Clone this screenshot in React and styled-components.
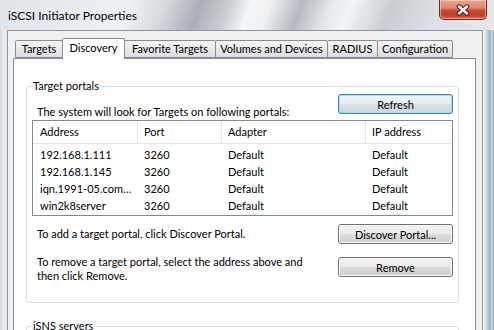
import React from 'react';
import styled, { createGlobalStyle } from 'styled-components';

const GlobalStyle = createGlobalStyle`
  html, body { margin: 0; padding: 0; }
  body {
    width: 494px;
    height: 330px;
    overflow: hidden;
    font-family: "Segoe UI", Lato, "Liberation Sans", sans-serif;
    font-size: 11px;
    color: #000;
  }
  * { box-sizing: border-box; }
`;

const Window = styled.div`
  width: 494px;
  height: 330px;
  display: flex;
  flex-direction: column;
  overflow: hidden;
`;

// aero glass strip with the diagonal reflections
const TitleBar = styled.div`
  height: 30px;
  flex: none;
  display: flex;
  justify-content: space-between;
  align-items: flex-start;
  padding: 0 7px 0 8px;
  background: linear-gradient(110deg,
    #dfe4e9 0%, #eef1f4 26%, #d6dade 33%, #a9afb5 40%, #cdd1d5 46%,
    #f4f6f8 50%, #eef0f2 54%, #b4babf 60%, #e6e9ec 66%, #f2f4f6 70%,
    #c9ced3 78%, #dde2e7 88%, #e4e8ec 100%);
`;

const Title = styled.span`
  font-size: 12px;
  line-height: 31px;
  color: #000;
`;

const CloseButton = styled.div`
  width: 48px;
  height: 20px;
  display: flex;
  align-items: center;
  justify-content: center;
  border: 1px solid #6a2d24;
  border-top: none;
  border-radius: 0 0 5px 5px;
  background: linear-gradient(#eba797 0%, #de8470 42%, #c94a32 55%, #c0412a 80%, #d56c54 100%);
  box-shadow: inset 0 0 0 1px rgba(255, 215, 205, 0.55);
`;

const Frame = styled.div`
  flex: 1;
  display: flex;
  padding: 0 11px 0 7px;
  background: linear-gradient(90deg,
    #cfd5db 0px, #e9ecef 3px, #e3e7eb 7px,
    #f3f5f7 484px, #b3c4d3 488px, #9fb3c5 490px, #d2dce5 492px, #8d9cab 494px);
`;

const Client = styled.div`
  flex: 1;
  min-width: 0;
  display: flex;
  flex-direction: column;
  background: #f0f0f0;
  border: 1px solid #8a97a5;
  border-bottom: none;
  padding: 7px 6px 0 5px;
`;

const TabStrip = styled.div`
  height: 20px;
  flex: none;
  display: flex;
  align-items: flex-end;
  padding-left: 2px;
  position: relative;
  z-index: 1;
`;

const Tab = styled.div`
  width: ${p => p.$width}px;
  height: ${p => (p.$active ? '21px' : '18px')};
  margin: 0 -1px ${p => (p.$active ? '-1px' : '0')} 0;
  border: 1px solid #898c95;
  border-bottom: ${p => (p.$active ? 'none' : '1px solid #898c95')};
  border-radius: 2px 2px 0 0;
  text-align: center;
  line-height: ${p => (p.$active ? '18px' : '16px')};
  white-space: nowrap;
  background: ${p => (p.$active ? '#fff' : 'linear-gradient(#f4f4f4, #e9e9e9 50%, #dedede)')};
  position: relative;
  z-index: ${p => (p.$active ? 2 : 1)};
`;

const Panel = styled.div`
  flex: 1;
  min-width: 0;
  display: flex;
  flex-direction: column;
  background: #fff;
  border: 1px solid #898c95;
  border-bottom: none;
  padding: 0 16px 0 12px;
`;

const GroupBox = styled.fieldset`
  margin: ${p => p.$gap}px 0 0 0;
  min-width: 0;
  min-height: ${p => p.$minHeight || 0}px;
  border: 1px solid #d5dfe5;
  border-radius: 3px;
  padding: 0 5px 20px 5px;
`;

const Legend = styled.legend`
  padding: 0 1px;
  line-height: 16px;
`;

const TopRow = styled.div`
  height: 26px;
  display: flex;
  justify-content: space-between;
  align-items: flex-start;
`;

const ActionRow = styled.div`
  display: flex;
  justify-content: space-between;
  align-items: ${p => p.$align || 'center'};
  margin-top: ${p => p.$gap}px;
`;

const Label = styled.div`
  margin: ${p => p.$top || 0}px 0 0 5px;
  line-height: ${p => p.$lh || 16}px;
  white-space: nowrap;
`;

const Button = styled.div`
  width: 115px;
  height: 20px;
  flex: none;
  margin-top: ${p => p.$top || 0}px;
  display: flex;
  align-items: center;
  justify-content: center;
  border: 1px solid ${p => (p.$default ? '#3c7fb1' : '#707070')};
  border-radius: 3px;
  background: ${p => (p.$default
    ? 'linear-gradient(#eef4f7 0%, #e6edf1 50%, #d7e1e7 50%, #ccd8df 100%)'
    : 'linear-gradient(#f2f2f2 0%, #ebebeb 50%, #dddddd 50%, #cfcfcf 100%)')};
  box-shadow: inset 0 0 0 1px ${p => (p.$default ? '#a9dcf2' : '#fcfcfc')};
`;

const ListBox = styled.div`
  height: 96px;
  border: 1px solid #828790;
  background: #fff;
`;

const Columns = styled.div`
  display: grid;
  grid-template-columns: 105px 84px 144px 1fr;
`;

const HeaderRow = styled(Columns)`
  height: 23px;
  border-bottom: 1px solid #e5e5e5;
  margin-bottom: 2px;
`;

const HeaderCell = styled.div`
  padding-left: 6px;
  line-height: 22px;
  border-right: 1px solid #e5e5e5;
  &:first-child { padding-left: 7px; }
  &:last-child { border-right: none; }
`;

const DataRow = styled(Columns)`
  height: 17px;
  line-height: 17px;
`;

const Cell = styled.div`
  padding-left: 6px;
  white-space: nowrap;
  overflow: hidden;
  &:first-child { padding-left: 7px; }
`;

const columns = ['Address', 'Port', 'Adapter', 'IP address'];

const portals = [
  ['192.168.1.111', '3260', 'Default', 'Default'],
  ['192.168.1.145', '3260', 'Default', 'Default'],
  ['iqn.1991-05.com\u2026', '3260', 'Default', 'Default'],
  ['win2k8server', '3260', 'Default', 'Default'],
];

const tabs = [
  { label: 'Targets', width: 48 },
  { label: 'Discovery', width: 63 },
  { label: 'Favorite Targets', width: 92 },
  { label: 'Volumes and Devices', width: 113 },
  { label: 'RADIUS', width: 51 },
  { label: 'Configuration', width: 76 },
];

const CloseGlyph = () => (
  <svg width="14" height="12" viewBox="0 0 14 12">
    <path d="M3 2.5 L11 9.5 M11 2.5 L3 9.5" stroke="#4a1a12" strokeWidth="4.4" strokeLinecap="round" fill="none" />
    <path d="M3 2.5 L11 9.5 M11 2.5 L3 9.5" stroke="#fff" strokeWidth="2.4" strokeLinecap="round" fill="none" />
  </svg>
);

export default function App() {
  return (
    <Window>
      <GlobalStyle />
      <TitleBar>
        <Title>iSCSI Initiator Properties</Title>
        <CloseButton><CloseGlyph /></CloseButton>
      </TitleBar>
      <Frame>
        <Client>
          <TabStrip>
            {tabs.map(t => (
              <Tab key={t.label} $width={t.width} $active={t.label === 'Discovery'}>{t.label}</Tab>
            ))}
          </TabStrip>
          <Panel>
            <GroupBox $gap={19}>
              <Legend>Target portals</Legend>
              <TopRow>
                <Label $top={10}>The system will look for Targets on following portals:</Label>
                <Button $default>Refresh</Button>
              </TopRow>
              <ListBox>
                <HeaderRow>
                  {columns.map(c => <HeaderCell key={c}>{c}</HeaderCell>)}
                </HeaderRow>
                {portals.map(row => (
                  <DataRow key={row[0]}>
                    {row.map((v, i) => <Cell key={i}>{v}</Cell>)}
                  </DataRow>
                ))}
              </ListBox>
              <ActionRow $gap={8}>
                <Label>To add a target portal, click Discover Portal.</Label>
                <Button>Discover Portal...</Button>
              </ActionRow>
              <ActionRow $gap={11} $align="flex-start">
                <Label $lh={13.5}>
                  To remove a target portal, select the address above and<br />
                  then click Remove.
                </Label>
                <Button $top={2}>Remove</Button>
              </ActionRow>
            </GroupBox>
            <GroupBox $gap={15} $minHeight={60}>
              <Legend>iSNS servers</Legend>
            </GroupBox>
          </Panel>
        </Client>
      </Frame>
    </Window>
  );
}
